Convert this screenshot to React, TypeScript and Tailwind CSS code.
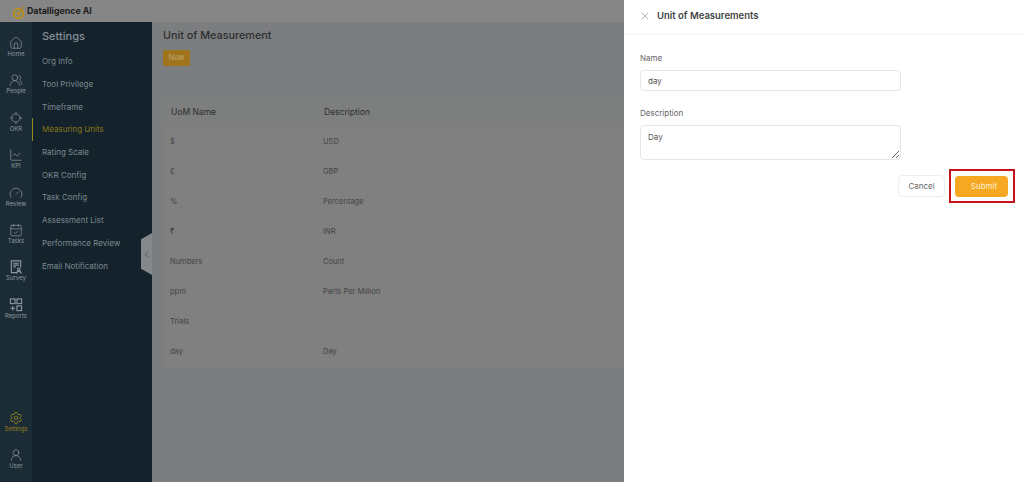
import { CalendarCheck, ChartLine, ChevronLeft, Gauge, House, Locate, Settings, UserRound, UsersRound, X } from "lucide-react";
import type { ReactNode } from "react";

function SurveyIcon() {
  return (
    <svg width="14" height="14" viewBox="0 0 15 15" fill="none" stroke="currentColor" strokeWidth="1.200">
      <path d="M8.500 13.500H2.500V1H12.500V8" />
      <path d="M4.500 3.500H10.500M4.500 5.500H10.500M4.500 7.500H7.500" />
      <circle cx="10.500" cy="10" r="1.400" />
      <path d="M8 14.500c0-1.500 1-2.300 2.500-2.300s2.500.8 2.500 2.300" />
    </svg>
  );
}

function ReportsIcon() {
  return (
    <svg width="14" height="14" viewBox="0 0 15 15" fill="none" stroke="currentColor" strokeWidth="1.200">
      <rect x="1.500" y="1" width="5" height="5" />
      <rect x="8.500" y="1" width="5" height="5" />
      <rect x="8.500" y="8.500" width="5" height="5" />
      <path d="M4 8.500V13.500M1.500 11H6.500" />
    </svg>
  );
}

function Logo() {
  return (
    <svg width="15" height="17" viewBox="0 0 15 17" fill="none" className="shrink-0">
      <circle cx="6.500" cy="10.500" r="4.800" stroke="#b8901c" strokeWidth="2" />
      <circle cx="6.500" cy="10.500" r="1.800" fill="#b8901c" />
      <path d="M8 9L12.500 2" stroke="#a8871f" strokeWidth="1" />
    </svg>
  );
}

const railTop: { label: string; icon: ReactNode }[] = [
  { label: "Home", icon: <House size={14} strokeWidth={1.2} /> },
  { label: "People", icon: <UsersRound size={14} strokeWidth={1.2} /> },
  { label: "OKR", icon: <Locate size={14} strokeWidth={1.2} /> },
  { label: "KPI", icon: <ChartLine size={14} strokeWidth={1.2} /> },
  { label: "Review", icon: <Gauge size={14} strokeWidth={1.2} /> },
  { label: "Tasks", icon: <CalendarCheck size={14} strokeWidth={1.2} /> },
  { label: "Survey", icon: <SurveyIcon /> },
  { label: "Reports", icon: <ReportsIcon /> },
];

const settingsLinks = [
  "Org Info",
  "Tool Privilege",
  "Timeframe",
  "Measuring Units",
  "Rating Scale",
  "OKR Config",
  "Task Config",
  "Assessment List",
  "Performance Review",
  "Email Notification",
];

const units = [
  ["$", "USD"],
  ["£", "GBP"],
  ["%", "Percentage"],
  ["₹", "INR"],
  ["Numbers", "Count"],
  ["ppm", "Parts Per Million"],
  ["Trials", ""],
  ["day", "Day"],
];

function RailItem({ label, icon, active }: { label: string; icon: ReactNode; active?: boolean }) {
  return (
    <div className={`flex h-[37.400px] flex-col items-center justify-start ${active ? "text-[#a8981c]" : "text-[#8d999f]"}`}>
      {icon}
      <span className={`text-[6px] leading-[8px] ${active ? "text-[#9b7d1a]" : ""}`}>{label}</span>
    </div>
  );
}

export default function App() {
  return (
    <div className="flex h-[482px] w-[1024px] overflow-hidden bg-white font-['Inter',sans-serif]">
      <div className="flex w-[624px] flex-col">
        <header className="flex h-[22px] shrink-0 items-center bg-[#868686] pl-[12px]">
          <Logo />
          <span className="text-[8.800px] font-bold text-[#1d1d1d]">Datalligence AI</span>
        </header>

        <div className="flex min-h-0 flex-1">
          <nav className="flex w-[32px] shrink-0 flex-col justify-between bg-[#1b2c37] pt-[14px]">
            <div>
              {railTop.map((item) => (
                <RailItem key={item.label} label={item.label} icon={item.icon} />
              ))}
            </div>
            <div className="h-[71px]">
              <RailItem label="Settings" active icon={<Settings size={14} strokeWidth={1.2} />} />
              <RailItem label="User" icon={<UserRound size={14} strokeWidth={1.2} />} />
            </div>
          </nav>

          <aside className="relative w-[120px] shrink-0 bg-[#14222c] pt-[6px]">
            <h2 className="pl-[10px] text-[11px] leading-[16px] font-medium text-[#859198]">Settings</h2>
            <ul className="mt-[6px]">
              {settingsLinks.map((link) => {
                const active = link === "Measuring Units";
                return (
                  <li
                    key={link}
                    className={`flex h-[22.700px] items-center border-l pl-[9px] text-[8px] ${
                      active ? "border-[#8f8a1c] text-[#857516]" : "border-transparent text-[#7c8990]"
                    }`}
                  >
                    {link}
                  </li>
                );
              })}
            </ul>
            <div className="absolute top-[211px] right-0 flex h-[42px] w-[11px] items-center justify-center bg-[#85888a] [clip-path:polygon(0_15%,100%_0,100%_100%,0_85%)]">
              <ChevronLeft size={11} strokeWidth={1.2} className="text-[#2a2a2a]" />
            </div>
          </aside>

          <main className="min-w-0 flex-1 bg-[#7b7d7e] pt-[6px] pl-[11px]">
            <h1 className="text-[10.800px] leading-[16px] font-medium text-[#2c2e30]">Unit of Measurement</h1>
            <button className="mt-[6px] block h-[16px] w-[27px] rounded-[2px] bg-[#a0741a] text-[7.500px] text-[#bda77a]">
              New
            </button>
            <table className="mt-[31px] w-full table-fixed border-collapse text-left">
              <thead>
                <tr className="h-[30px] bg-[#7d7e7e] text-[8.500px] text-[#2e2e2e]">
                  <th className="w-[153px] pl-[8px] font-normal">UoM Name</th>
                  <th className="pl-[8px] font-normal">Description</th>
                </tr>
              </thead>
              <tbody>
                {units.map(([name, description]) => (
                  <tr key={name} className="h-[30px] bg-[#808080] text-[7.500px] text-[#434343]">
                    <td className="pl-[7px]">{name}</td>
                    <td className="pl-[7px]">{description}</td>
                  </tr>
                ))}
              </tbody>
            </table>
          </main>
        </div>
      </div>

      <section className="w-[400px] shrink-0 bg-white">
        <div className="flex h-[35px] items-center gap-[6px] border-b border-[#f5f5f5] pb-[2px] pl-[15px]">
          <X size={12} strokeWidth={1} className="text-[#666]" />
          <h2 className="text-[9.500px] font-semibold text-[#444]">Unit of Measurements</h2>
        </div>
        <div className="px-[16px] pt-[17px]">
          <label className="block text-[8px] leading-[12px] text-[#666]">Name</label>
          <input
            readOnly
            value="day"
            className="mt-[6px] block h-[21px] w-[261px] rounded-[4px] border border-[#e6e6e6] px-[7px] text-[8px] text-[#555] outline-none"
          />
          <label className="mt-[16px] block text-[8px] leading-[12px] text-[#666]">Description</label>
          <textarea
            readOnly
            value="Day"
            className="mt-[6px] block h-[35px] w-[261px] rounded-[4px] border border-[#e6e6e6] px-[7px] py-[5px] text-[8px] text-[#555] outline-none"
          />
          <div className="mt-[9px] flex w-[375px] items-center">
            <button className="ml-[258px] h-[22px] w-[47px] shrink-0 rounded-[4px] border border-[#eeeeee] bg-white text-[8px] text-[#666]">
              Cancel
            </button>
            <div className="ml-[4px] flex h-[34px] w-[66px] shrink-0 items-center justify-center border-2 border-[#c8101e] pr-[1px]">
              <button className="h-[21px] w-[53px] rounded-[4px] bg-[#f7a823] pl-[5px] text-[8px] text-[#fdf1d4]">
                Submit
              </button>
            </div>
          </div>
        </div>
      </section>
    </div>
  );
}
